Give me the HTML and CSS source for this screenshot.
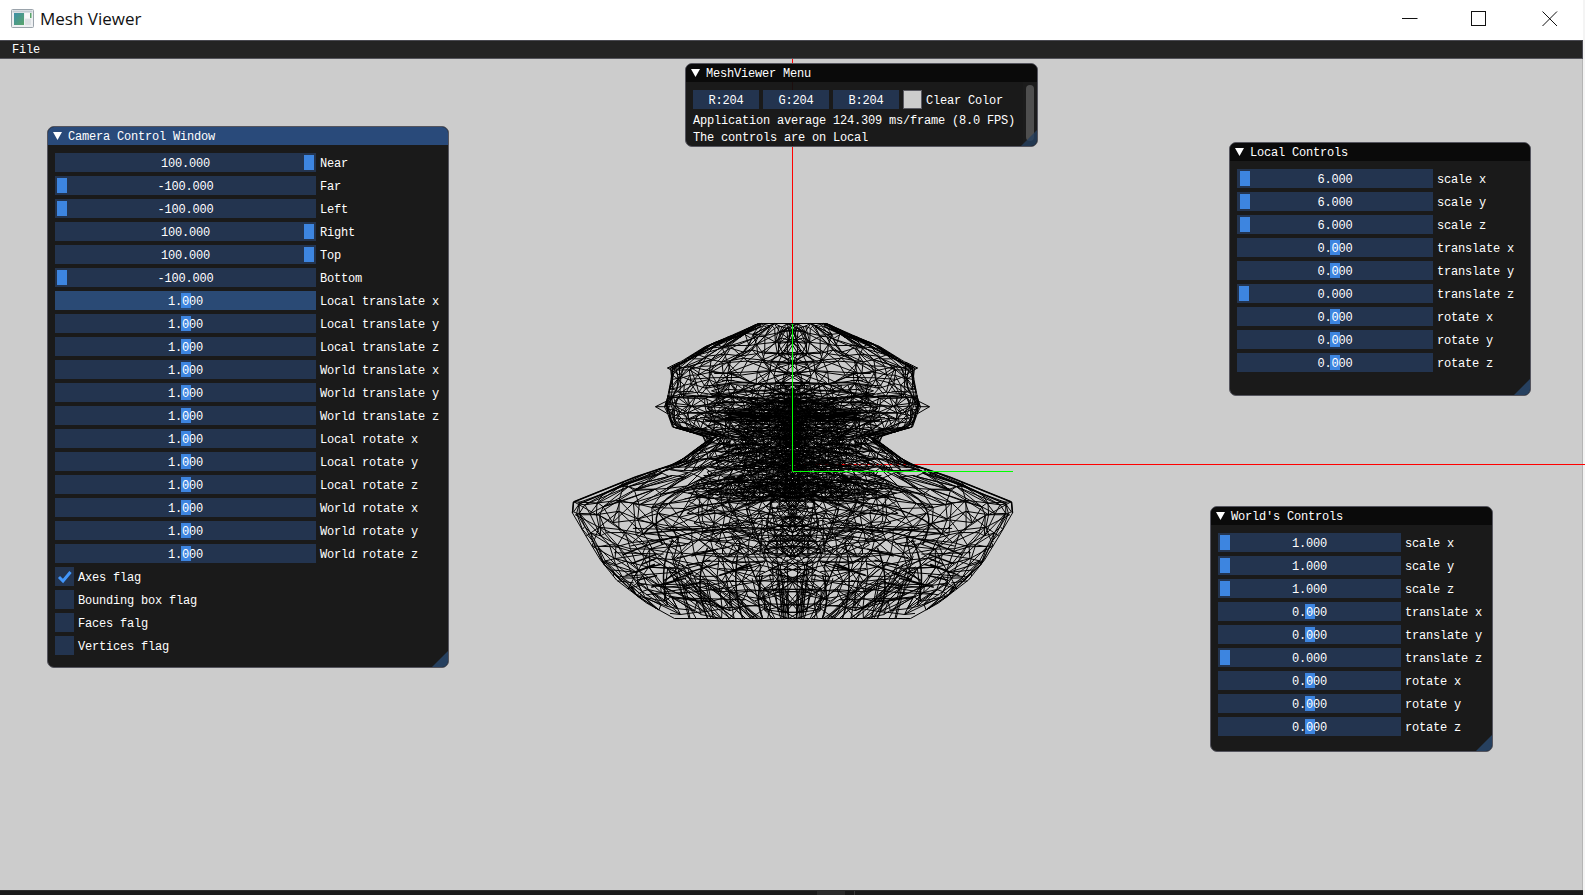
FILE: index.html
```html
<!DOCTYPE html>
<html lang="en">
<head>
<meta charset="utf-8">
<title>Mesh Viewer</title>
<link rel="stylesheet" href="styles.css">
</head>
<body>
<div class="app">
  <header class="titlebar">
    <svg class="app-icon" width="24" height="20" viewBox="0 0 24 20">
      <defs><linearGradient id="ig" x1="0" y1="0" x2="1" y2="1"><stop offset="0" stop-color="#3d8fa8"/><stop offset="1" stop-color="#5aa56a"/></linearGradient></defs>
      <rect x="0.5" y="0.5" width="22" height="18" rx="1" fill="#eef0f2" stroke="#9aa3ab"/>
      <rect x="1.5" y="1.5" width="20" height="2" fill="#c3ccd3"/>
      <rect x="3" y="4" width="10" height="12" fill="url(#ig)"/>
      <rect x="14" y="4" width="6" height="5" fill="#f8f8f8"/>
      <rect x="19" y="4" width="1.5" height="5" fill="#5aa56a"/>
      <rect x="14" y="10" width="6" height="6" fill="#dde1e4"/>
    </svg>
    <span class="app-name">Mesh Viewer</span>
    <div class="win-btns">
      <svg class="win-btn" width="16" height="16" viewBox="0 0 16 16"><path d="M0 7.5H15.5" stroke="#111" fill="none"/></svg>
      <svg class="win-btn" width="16" height="16" viewBox="0 0 16 16"><rect x="0.5" y="0.5" width="14" height="14" stroke="#111" fill="none"/></svg>
      <svg class="win-btn" width="16" height="16" viewBox="0 0 16 16"><path d="M0.5 0.5L15 15M15 0.5L0.5 15" stroke="#111" fill="none"/></svg>
    </div>
  </header>
  <nav class="menubar"><span class="menu-item">File</span></nav>
  <main class="canvas">
    <svg class="scene" width="1585" height="831" viewBox="0 59 1585 831">
      <path d="M792.5 59V324M795 464.5H1585" stroke="#ff0000" fill="none"/>
      <g id="mesh"></g>
      <path d="M792.5 324V471.5H1013" stroke="#00ff00" fill="none"/>
    </svg>

    <section class="win win-camera active">
      <div class="win-title"><svg class="tri" width="9" height="8" viewBox="0 0 9 8"><path d="M0 0H9L4.5 8Z"/></svg><span>Camera Control Window</span></div>
      <div class="win-body">
        <div class="row"><div class="slider"><i class="grab" style="--f:1"></i><b>100.000</b></div><span>Near</span></div>
        <div class="row"><div class="slider"><i class="grab" style="--f:0"></i><b>-100.000</b></div><span>Far</span></div>
        <div class="row"><div class="slider"><i class="grab" style="--f:0"></i><b>-100.000</b></div><span>Left</span></div>
        <div class="row"><div class="slider"><i class="grab" style="--f:1"></i><b>100.000</b></div><span>Right</span></div>
        <div class="row"><div class="slider"><i class="grab" style="--f:1"></i><b>100.000</b></div><span>Top</span></div>
        <div class="row"><div class="slider"><i class="grab" style="--f:0"></i><b>-100.000</b></div><span>Bottom</span></div>
        <div class="row"><div class="slider hover"><i class="grab" style="--f:.5"></i><b>1.000</b></div><span>Local translate x</span></div>
        <div class="row"><div class="slider"><i class="grab" style="--f:.5"></i><b>1.000</b></div><span>Local translate y</span></div>
        <div class="row"><div class="slider"><i class="grab" style="--f:.5"></i><b>1.000</b></div><span>Local translate z</span></div>
        <div class="row"><div class="slider"><i class="grab" style="--f:.5"></i><b>1.000</b></div><span>World translate x</span></div>
        <div class="row"><div class="slider"><i class="grab" style="--f:.5"></i><b>1.000</b></div><span>World translate y</span></div>
        <div class="row"><div class="slider"><i class="grab" style="--f:.5"></i><b>1.000</b></div><span>World translate z</span></div>
        <div class="row"><div class="slider"><i class="grab" style="--f:.5"></i><b>1.000</b></div><span>Local rotate x</span></div>
        <div class="row"><div class="slider"><i class="grab" style="--f:.5"></i><b>1.000</b></div><span>Local rotate y</span></div>
        <div class="row"><div class="slider"><i class="grab" style="--f:.5"></i><b>1.000</b></div><span>Local rotate z</span></div>
        <div class="row"><div class="slider"><i class="grab" style="--f:.5"></i><b>1.000</b></div><span>World rotate x</span></div>
        <div class="row"><div class="slider"><i class="grab" style="--f:.5"></i><b>1.000</b></div><span>World rotate y</span></div>
        <div class="row"><div class="slider"><i class="grab" style="--f:.5"></i><b>1.000</b></div><span>World rotate z</span></div>
        <div class="row"><div class="check"><svg width="19" height="19" viewBox="0 0 19 19"><path d="M4 10L8 14L15.5 5" stroke="#4296fa" stroke-width="3" fill="none"/></svg></div><span>Axes flag</span></div>
        <div class="row"><div class="check"></div><span>Bounding box flag</span></div>
        <div class="row"><div class="check"></div><span>Faces falg</span></div>
        <div class="row"><div class="check"></div><span>Vertices flag</span></div>
      </div>
      <div class="grip"></div>
    </section>

    <section class="win win-menu">
      <div class="win-title"><svg class="tri" width="9" height="8" viewBox="0 0 9 8"><path d="M0 0H9L4.5 8Z"/></svg><span>MeshViewer Menu</span></div>
      <div class="win-body">
        <div class="row"><div class="chan">R:204</div><div class="chan">G:204</div><div class="chan">B:204</div><div class="swatch"></div><span>Clear Color</span></div>
        <div class="line">Application average 124.309 ms/frame (8.0 FPS)</div>
        <div class="line">The controls are on Local</div>
      </div>
      <div class="scrollbar"><div class="scrollgrab"></div></div>
      <div class="grip"></div>
    </section>

    <section class="win win-local">
      <div class="win-title"><svg class="tri" width="9" height="8" viewBox="0 0 9 8"><path d="M0 0H9L4.5 8Z"/></svg><span>Local Controls</span></div>
      <div class="win-body">
        <div class="row"><div class="slider"><i class="grab" style="--f:.006"></i><b>6.000</b></div><span>scale x</span></div>
        <div class="row"><div class="slider"><i class="grab" style="--f:.006"></i><b>6.000</b></div><span>scale y</span></div>
        <div class="row"><div class="slider"><i class="grab" style="--f:.006"></i><b>6.000</b></div><span>scale z</span></div>
        <div class="row"><div class="slider"><i class="grab" style="--f:.5"></i><b>0.000</b></div><span>translate x</span></div>
        <div class="row"><div class="slider"><i class="grab" style="--f:.5"></i><b>0.000</b></div><span>translate y</span></div>
        <div class="row"><div class="slider"><i class="grab" style="--f:0"></i><b>0.000</b></div><span>translate z</span></div>
        <div class="row"><div class="slider"><i class="grab" style="--f:.5"></i><b>0.000</b></div><span>rotate x</span></div>
        <div class="row"><div class="slider"><i class="grab" style="--f:.5"></i><b>0.000</b></div><span>rotate y</span></div>
        <div class="row"><div class="slider"><i class="grab" style="--f:.5"></i><b>0.000</b></div><span>rotate z</span></div>
      </div>
      <div class="grip"></div>
    </section>

    <section class="win win-world">
      <div class="win-title"><svg class="tri" width="9" height="8" viewBox="0 0 9 8"><path d="M0 0H9L4.5 8Z"/></svg><span>World's Controls</span></div>
      <div class="win-body">
        <div class="row"><div class="slider"><i class="grab" style="--f:0"></i><b>1.000</b></div><span>scale x</span></div>
        <div class="row"><div class="slider"><i class="grab" style="--f:0"></i><b>1.000</b></div><span>scale y</span></div>
        <div class="row"><div class="slider"><i class="grab" style="--f:0"></i><b>1.000</b></div><span>scale z</span></div>
        <div class="row"><div class="slider"><i class="grab" style="--f:.5"></i><b>0.000</b></div><span>translate x</span></div>
        <div class="row"><div class="slider"><i class="grab" style="--f:.5"></i><b>0.000</b></div><span>translate y</span></div>
        <div class="row"><div class="slider"><i class="grab" style="--f:0"></i><b>0.000</b></div><span>translate z</span></div>
        <div class="row"><div class="slider"><i class="grab" style="--f:.5"></i><b>0.000</b></div><span>rotate x</span></div>
        <div class="row"><div class="slider"><i class="grab" style="--f:.5"></i><b>0.000</b></div><span>rotate y</span></div>
        <div class="row"><div class="slider"><i class="grab" style="--f:.5"></i><b>0.000</b></div><span>rotate z</span></div>
      </div>
      <div class="grip"></div>
    </section>
  </main>
  <footer class="statusbar"><span class="stat-a"></span><span class="stat-b"></span></footer>
</div>
<script src="mesh.js"></script>
</body>
</html>
```
FILE: styles.css
```css
* { box-sizing: border-box; }
html, body { margin: 0; height: 100%; overflow: hidden; background: #f4f4f4; }
body { font-family: "Liberation Mono", "DejaVu Sans Mono", monospace; font-size: 12px; letter-spacing: -0.2px; color: #fff; }
.app { width: 1583px; height: 895px; display: flex; flex-direction: column; }

.titlebar { flex: 0 0 40px; background: #fff; display: flex; align-items: center; padding-left: 11px; color: #111; letter-spacing: 0; }
.app-icon { margin-right: 5px; margin-top: -3px; }
.app-name { font-family: "Open Sans", "Noto Sans", sans-serif; font-size: 17px; margin-top: -4px; }
.win-btns { margin-left: auto; display: flex; align-items: center; gap: 54px; padding-right: 25px; margin-top: -3px; }
.win-btn { display: block; }
.win-btn:nth-child(2) { margin-left: -1px; margin-right: 1px; }

.menubar { flex: 0 0 19px; background: #242424; border-top: 1px solid #4a4a52; border-bottom: 1px solid #55555c; border-right: 1px solid #4a4a52; display: flex; align-items: center; padding-left: 12px; }
.menu-item { line-height: 16px; padding-top: 1px; }

.canvas { flex: 1 1 auto; position: relative; background: #cccccc; border-right: 1px solid #b4b4b4; }
.scene { position: absolute; left: 0; top: 0; }

.statusbar { flex: 0 0 5px; background: #1a1a1a; border-top: 1px solid #2c2c2c; display: flex; padding-left: 817px; }
.stat-a { width: 28px; background: #2b2b2b; }
.stat-b { width: 1px; margin-left: 9px; background: #3a3a3a; }

.win { position: absolute; background: rgba(15, 15, 15, .94); border: 1px solid #55555e; border-radius: 7px; overflow: hidden; }
.win-camera { left: 47px; top: 67px; width: 402px; height: 542px; --sw: 261px; }
.win-menu { left: 685px; top: 4px; width: 353px; height: 84px; }
.win-local { left: 1229px; top: 83px; width: 302px; height: 254px; --sw: 196px; }
.win-world { left: 1210px; top: 447px; width: 283px; height: 246px; --sw: 183px; }

.win-title { height: 18px; background: #0a0a0a; display: flex; align-items: center; gap: 6px; padding-left: 5px; white-space: pre; }
.win-title span { padding-top: 1px; }
.win.active .win-title { background: #294a7a; }
.tri { fill: #fff; flex: none; margin-top: -1px; }
.win-body { padding: 8px 7px; display: flex; flex-direction: column; gap: 4px; }

.row { height: 19px; display: flex; align-items: center; gap: 4px; white-space: pre; }
.row > span, .slider b, .chan { padding-top: 2px; }
.slider { width: var(--sw); height: 19px; flex: none; background: #23344f; position: relative; display: flex; align-items: center; justify-content: center; }
.slider.hover { background: #2a4a75; }
.slider b { font-weight: 400; position: relative; }
.grab { position: absolute; top: 2px; width: 10px; height: 15px; background: #3d85e0; left: calc(2px + (100% - 14px) * var(--f)); }
.check { width: 19px; height: 19px; flex: none; background: #23344f; }
.check svg { display: block; }

.win-menu .win-body { padding-right: 0; }
.chan { width: 66px; height: 19px; background: #23344f; display: flex; align-items: center; justify-content: center; }
.swatch { width: 19px; height: 19px; background: #cccccc; border: 1px solid #5a5a62; }
.line { height: 13px; line-height: 16px; white-space: pre; }
.scrollbar { position: absolute; right: 0; top: 18px; bottom: 0; width: 14px; background: #1c1c1c; padding: 3px 3px 5px 3px; }
.scrollgrab { height: 100%; background: #4f4f4f; border-radius: 4px; }

.grip { position: absolute; right: 0; bottom: 0; width: 16px; height: 16px; background: #26405f; clip-path: polygon(100% 0, 100% 100%, 0 100%); }
.win-menu .grip { opacity: .8; }
```
FILE: mesh.js
```js
(function () {
  var seed = 20240611;
  function rnd() {
    seed = (seed + 0x6D2B79F5) | 0;
    var t = Math.imul(seed ^ (seed >>> 15), 1 | seed);
    t = (t + Math.imul(t ^ (t >>> 7), 61 | t)) ^ t;
    return ((t ^ (t >>> 14)) >>> 0) / 4294967296;
  }
  var CX = 792.5, TOP = 323.5, BOT = 618.5;
  var prof = [[323.5,34],[335,60],[347,88],[360,109],[368,122],[377,121],[398,125],[407,128],[413,125],[427,120],[438,80],[443,88],[463,115],[477,157],[502,219],[513,220],[537,206],[560,192],[580,176],[603,146],[618.5,118]];
  function radius(table, y) {
    if (y <= table[0][0]) return table[0][1];
    for (var i = 1; i < table.length; i++) {
      if (y <= table[i][0]) {
        var a = table[i - 1], b = table[i], t = (y - a[0]) / (b[0] - a[0]);
        return a[1] + (b[1] - a[1]) * t;
      }
    }
    return table[table.length - 1][1];
  }
  var thin = [], heavy = [], d = thin;
  function raw(x1, y1, x2, y2) {
    d.push("M" + (CX + x1).toFixed(1) + " " + y1.toFixed(1) + "L" + (CX + x2).toFixed(1) + " " + y2.toFixed(1));
    d.push("M" + (CX - x1).toFixed(1) + " " + y1.toFixed(1) + "L" + (CX - x2).toFixed(1) + " " + y2.toFixed(1));
  }
  function cy(y) { return Math.min(BOT, Math.max(TOP, y)); }
  function seg(x1, y1, x2, y2) {
    y1 = cy(y1); y2 = cy(y2);
    raw(Math.min(x1, radius(prof, y1)), y1, Math.min(x2, radius(prof, y2)), y2);
  }
  function grid(table, y0, y1, dy, n, bow, jit, curve) {
    var rings = [];
    for (var y = y0; y <= y1 + 0.01; y += dy) {
      var ring = [], r = radius(table, y);
      for (var j = 0; j <= n; j++) {
        var u = (j + (j < n ? (rnd() - 0.5) * 0.8 : 0)) / n;
        var w = curve ? Math.sin(u * Math.PI / 2) : u;
        var x = -0.12 * r + 1.12 * r * w;
        var yy = y + (rnd() - 0.5) * jit + bow * (1 - w * w);
        ring.push([x, yy]);
      }
      rings.push(ring);
    }
    for (var k = 0; k < rings.length; k++) {
      for (var i = 0; i < n; i++) {
        seg(rings[k][i][0], rings[k][i][1], rings[k][i + 1][0], rings[k][i + 1][1]);
        if (k + 1 < rings.length) {
          var a = rings[k][i], b = rings[k + 1][i], c = rings[k + 1][i + 1];
          seg(a[0], a[1], b[0], b[1]);
          if (rnd() < 0.5) seg(a[0], a[1], c[0], c[1]);
          else seg(rings[k][i + 1][0], rings[k][i + 1][1], b[0], b[1]);
        }
      }
    }
  }
  // outer surface, front and back
  grid(prof, 323.5, 400, 11, 11, 6, 6, true);
  grid(prof, 328, 400, 10, 10, -5, 7, true);
  grid(prof, 395, 470, 8, 12, 3, 4, true);
  grid(prof, 398, 470, 8, 11, -3, 4, true);
  grid(prof, 470, 618.5, 15, 13, 18, 9, true);
  grid(prof, 476, 618.5, 14, 11, -8, 10, false);
  // layered interior so the core of the head darkens gradually
  grid([[385,80],[420,88],[450,68],[500,110]], 385, 500, 4.5, 11, 0, 3, false);
  grid([[400,45],[430,55],[460,48],[500,60]], 400, 500, 4, 8, 0, 3, false);
  grid([[470,60],[510,110],[555,70]], 475, 555, 8, 10, 0, 6, false);
  // horizontal bands across the head
  for (var i = 0; i < 26; i++) {
    var y = 372 + rnd() * 60, x = rnd() * 100;
    seg(x, y, x + 10 + rnd() * 30, y + (rnd() - 0.5) * 3);
  }
  // strands fanning to the base
  for (i = 0; i < 30; i++) {
    var tx = 3 + rnd() * 130, ty = 550 + rnd() * 40, bx = tx * (0.35 + rnd() * 0.6);
    seg(tx, ty, bx, BOT);
  }
  for (i = 0; i < 30; i++) {
    var ax = rnd() * 170, ay = 520 + rnd() * 80, cx2 = ax + 20 + rnd() * 50;
    seg(ax, ay, cx2, ay + (rnd() - 0.3) * 12);
  }
  // thin silhouette for the head and lower body
  for (i = 1; i < prof.length; i++) {
    raw(prof[i - 1][1], prof[i - 1][0], prof[i][1], prof[i][0]);
  }
  d.push("M" + (CX - 34) + " " + TOP + "H" + (CX + 34));
  d.push("M" + (CX - 118) + " " + BOT + "H" + (CX + 118));
  // small spikes on the head
  [[125, 368], [137, 406.7]].forEach(function (p) {
    raw(p[0], p[1], p[0] - 12, p[1] - 6);
    raw(p[0], p[1], p[0] - 12, p[1] + 7);
    raw(p[0], p[1], p[0] - 15, p[1]);
    raw(p[0] - 12, p[1] - 6, p[0] - 12, p[1] + 7);
  });
  // heavier strokes: brow shadows, collar, shoulder arcs, shoulder line
  d = heavy;
  for (i = 0; i < 26; i++) {
    var ex = 10 + rnd() * 40, ey = 412 + rnd() * 7;
    seg(ex, ey, ex + 8 + rnd() * 14, ey + 2 - rnd() * 4);
  }
  for (i = 0; i < 24; i++) {
    var nx = rnd() * 70, ny = 440 + rnd() * 55;
    seg(nx, ny, nx + 6 + rnd() * 14, ny + (rnd() - 0.5) * 5);
  }
  for (i = 0; i < 16; i++) {
    var lx = 40 + rnd() * 100, ly = 540 + rnd() * 45;
    seg(lx, ly, lx + 12 + rnd() * 22, ly + 4 + rnd() * 8);
  }
  function arc(x0, y0, xc, yc, x1, y1) {
    var px = x0, py = y0;
    for (var t = 1; t <= 12; t++) {
      var u = t / 12, v = 1 - u;
      var qx = v * v * x0 + 2 * u * v * xc + u * u * x1, qy = v * v * y0 + 2 * u * v * yc + u * u * y1;
      seg(px, py, qx, qy);
      px = qx; py = qy;
    }
  }
  arc(50, 478, 160, 485, 130, 545);
  arc(20, 500, 120, 500, 150, 535);
  arc(10, 530, 90, 520, 170, 555);
  arc(85, 548, 100, 585, 85, 618);
  arc(55, 555, 60, 590, 50, 618);
  arc(120, 540, 135, 570, 125, 605);
  arc(30, 575, 38, 600, 30, 618);
  for (i = 1; i < prof.length; i++) {
    if (prof[i][0] > 440 && prof[i][0] <= 513) raw(prof[i - 1][1], prof[i - 1][0], prof[i][1], prof[i][0]);
  }
  function addPath(data, width) {
    var path = document.createElementNS("http://www.w3.org/2000/svg", "path");
    path.setAttribute("d", data.join(""));
    path.setAttribute("stroke", "#000");
    path.setAttribute("stroke-width", width);
    path.setAttribute("fill", "none");
    document.getElementById("mesh").appendChild(path);
  }
  addPath(thin, "1");
  addPath(heavy, "1.5");
})();
```
